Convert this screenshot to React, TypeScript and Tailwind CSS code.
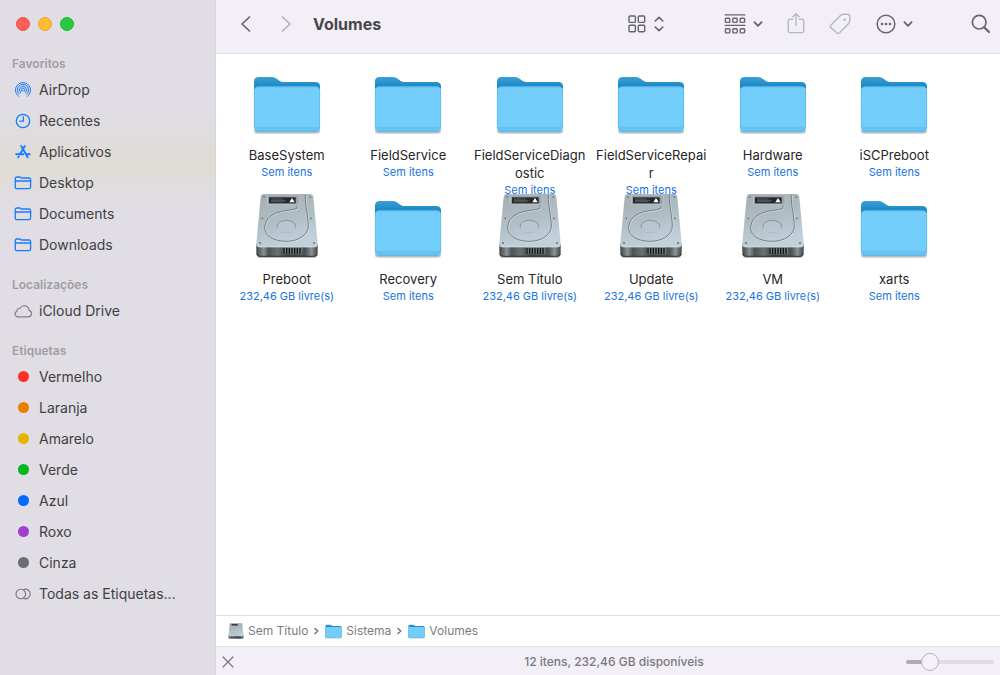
import React, { useState } from "react";

type Tag = {
    name: string,
    color: string,
}

type Item = {
    name: string,
    info: string,
    kind: "folder" | "drive",
}

const FREE = "232,46 GB livre(s)"
const EMPTY = "Sem itens"

const items: Item[] = [
    { name: "BaseSystem", info: EMPTY, kind: "folder" },
    { name: "FieldService", info: EMPTY, kind: "folder" },
    { name: "FieldServiceDiagnostic", info: EMPTY, kind: "folder" },
    { name: "FieldServiceRepair", info: EMPTY, kind: "folder" },
    { name: "Hardware", info: EMPTY, kind: "folder" },
    { name: "iSCPreboot", info: EMPTY, kind: "folder" },
    { name: "Preboot", info: FREE, kind: "drive" },
    { name: "Recovery", info: EMPTY, kind: "folder" },
    { name: "Sem Título", info: FREE, kind: "drive" },
    { name: "Update", info: FREE, kind: "drive" },
    { name: "VM", info: FREE, kind: "drive" },
    { name: "xarts", info: EMPTY, kind: "folder" },
]

const tags: Tag[] = [
    { name: "Vermelho", color: "bg-[#ff3126]" },
    { name: "Laranja", color: "bg-[#ed7d00]" },
    { name: "Amarelo", color: "bg-[#e8b400]" },
    { name: "Verde", color: "bg-[#00b81f]" },
    { name: "Azul", color: "bg-[#0069ff]" },
    { name: "Roxo", color: "bg-[#a03fcf]" },
    { name: "Cinza", color: "bg-[#6d6c73]" },
]

const stroke = {
    fill: "none",
    stroke: "currentColor",
    strokeLinecap: "round",
    strokeLinejoin: "round",
} as const

/* sidebar icons */

function AirDropIcon() {
    return (
        <svg width="18" height="18" viewBox="0 0 18 18" {...stroke} strokeWidth="1">
            <path d="M4.6 15.4A7.6 7.6 0 1 1 13.4 15.4" />
            <path d="M5.3 13.2A5.6 5.6 0 1 1 12.7 13.2" />
            <path d="M6.3 11.6A3.7 3.7 0 1 1 11.7 11.6" />
            <path d="M7.6 10.3A1.9 1.9 0 1 1 10.4 10.3" />
            <circle cx="9" cy="9.4" r="0.7" fill="currentColor" stroke="none" />
        </svg>
    )
}

function ClockIcon() {
    return (
        <svg width="18" height="18" viewBox="0 0 18 18" {...stroke} strokeWidth="1.3">
            <circle cx="9" cy="9" r="6.7" />
            <path d="M9.4 4.8V9.2H5.8" />
        </svg>
    )
}

function AppsIcon() {
    return (
        <svg width="18" height="18" viewBox="0 0 18 18" {...stroke} strokeWidth="1.9">
            <path d="M7.2 3.1L13.7 14.2" />
            <path d="M10.8 3.1L6.1 11" />
            <path d="M2.2 11.2H9.4M12.6 11.2H15.8" />
            <path d="M4.7 13.6L4.3 14.3" />
        </svg>
    )
}

function FolderLineIcon() {
    return (
        <svg width="18" height="18" viewBox="0 0 18 18" {...stroke} strokeWidth="1.3">
            <path d="M1.3 4.6Q1.3 3 2.9 3H5.6Q6.3 3 6.8 3.5L7.4 4H14.9Q16.6 4 16.6 5.6V13Q16.6 14.7 14.9 14.7H3Q1.3 14.7 1.3 13Z" />
            <path d="M1.3 7H16.6" />
        </svg>
    )
}

function CloudIcon() {
    return (
        <svg width="20" height="18" viewBox="0 0 20 18" {...stroke} strokeWidth="1.2">
            <path d="M5 14.8H15.2A3.3 3.3 0 0 0 16 8.3A4.8 4.8 0 0 0 7 6.3A2.7 2.7 0 0 0 3.9 9.2A2.9 2.9 0 0 0 5 14.8Z" />
        </svg>
    )
}

function AllTagsIcon() {
    return (
        <svg width="18" height="18" viewBox="0 0 18 18" {...stroke} strokeWidth="1.1">
            <circle cx="6.8" cy="9" r="4.8" />
            <path d="M9.8 4.5A4.8 4.8 0 1 1 9.8 13.5" />
        </svg>
    )
}

/* big icons */

function Folder({ className }: { className: string }) {
    return (
        <svg className={className} viewBox="52 18 210 192">
            <defs>
                <linearGradient id="folderBack" x1="0" y1="0" x2="0" y2="1">
                    <stop offset="0" stopColor="#3b9fd3" />
                    <stop offset="0.2" stopColor="#1886c5" />
                    <stop offset="1" stopColor="#1886c5" />
                </linearGradient>
                <linearGradient id="folderFront" x1="0" y1="0" x2="0" y2="1">
                    <stop offset="0" stopColor="#5fbdec" />
                    <stop offset="0.05" stopColor="#74cefb" />
                    <stop offset="0.88" stopColor="#73cdfa" />
                    <stop offset="0.9" stopColor="#63bdea" />
                    <stop offset="0.93" stopColor="#6cc7f4" />
                    <stop offset="1" stopColor="#5db5e2" />
                </linearGradient>
            </defs>
            <rect x="58" y="190" width="198" height="16" rx="10" fill="#000" opacity="0.22" />
            <path d="M58 50Q58 36 72 36H112Q120 36 126 41L134 47Q139 51 147 51H242Q256 51 256 65V190H58Z" fill="url(#folderBack)" />
            <path d="M58 79Q58 64 73 64H241Q256 64 256 79V187Q256 202 241 202H73Q58 202 58 187Z" fill="url(#folderFront)" />
            <path d="M59 78V188M255 78V188" stroke="#57b5e4" strokeWidth="2" />
        </svg>
    )
}

function Drive({ className }: { className: string }) {
    return (
        <svg className={className} viewBox="62 25 192 198">
            <defs>
                <linearGradient id="driveTop" x1="0" y1="0" x2="0.3" y2="1">
                    <stop offset="0" stopColor="#a4adb2" />
                    <stop offset="0.6" stopColor="#b2bfc7" />
                    <stop offset="1" stopColor="#c1d0da" />
                </linearGradient>
                <linearGradient id="driveFront" x1="0" y1="0" x2="1" y2="0">
                    <stop offset="0" stopColor="#3f4445" />
                    <stop offset="0.12" stopColor="#8b9294" />
                    <stop offset="0.2" stopColor="#4d5354" />
                    <stop offset="0.35" stopColor="#6a7173" />
                    <stop offset="0.5" stopColor="#3c4142" />
                    <stop offset="0.8" stopColor="#4d5354" />
                    <stop offset="0.9" stopColor="#8b9294" />
                    <stop offset="1" stopColor="#3f4445" />
                </linearGradient>
            </defs>
            <rect x="68" y="206" width="180" height="14" rx="7" fill="#000" opacity="0.25" />
            <path d="M66 178H250V205Q250 216 239 216H77Q66 216 66 205Z" fill="url(#driveFront)" />
            <path d="M67 208Q70 215 78 215H238Q246 215 249 208" fill="none" stroke="#303435" strokeWidth="3" />
            <path d="M146 188H204V209H146Z" fill="#6f7677" />
            <path d="M149 190V208M157 190V208M165 190V208M173 190V208M181 190V208M189 190V208M197 190V208" stroke="#151718" strokeWidth="4" />
            <path d="M90 28H226Q236 28 237 38L250 176Q251 187 240 187H76Q65 187 66 176L79 38Q80 28 90 28Z" fill="url(#driveTop)" />
            <path d="M67 181Q69 187 76 187H240Q247 187 249 181" fill="none" stroke="#dfe9f0" strokeWidth="2" />
            <path d="M99 31H194V60H99Z" fill="#9ba4aa" stroke="#c2cbd1" strokeWidth="2" />
            <rect x="104" y="38" width="80" height="18" fill="#25282a" />
            <path d="M110 43H145M110 47H155M110 51H150" stroke="#6f7578" strokeWidth="2" />
            <path d="M173 40L181 53H165Z" fill="#fff" />
            <path d="M213 31C213 72 221 88 222 124C222 150 192 170 156 170C118 170 90 154 91 128C93 104 109 91 131 83C151 76 172 78 188 71V62" fill="none" stroke="#d5dfe5" strokeWidth="3" transform="translate(2 2)" />
            <path d="M213 31C213 72 221 88 222 124C222 150 192 170 156 170C118 170 90 154 91 128C93 104 109 91 131 83C151 76 172 78 188 71V62" fill="none" stroke="#6b747a" strokeWidth="2.6" />
            <ellipse cx="156" cy="125" rx="28" ry="18" fill="#b9c6cf" stroke="#7c868d" strokeWidth="2.4" />
            <path d="M129 129A28 18 0 0 0 183 129" fill="none" stroke="#e4edf3" strokeWidth="2" />
            <g fill="#657077">
                <circle cx="89" cy="37" r="2.6" />
                <circle cx="228" cy="37" r="2.6" />
                <circle cx="84" cy="101" r="2.6" />
                <circle cx="230" cy="101" r="2.6" />
                <circle cx="77" cy="175" r="3" />
                <circle cx="239" cy="175" r="3" />
            </g>
        </svg>
    )
}

function ItemTile({ item }: { item: Item }) {
    return (
        <button type="button" className="flex h-[124px] min-w-0 flex-col items-center">
            <span className="flex h-16 shrink-0 items-end justify-center">
                {item.kind === "folder" ? <Folder className="h-16 w-[70px]" /> : <Drive className="h-[66px] w-16" />}
            </span>
            <span className="mt-[11px] w-[113px] text-center text-[13px] leading-[18px] break-all text-[#262626]">{item.name}</span>
            <span className="text-[11px] leading-4 whitespace-nowrap text-[#1a73dc]">{item.info}</span>
        </button>
    )
}

function SidebarLink({ icon, label }: { icon: React.ReactNode, label: string }) {
    return (
        <li>
            <a href="#" className="flex h-[31px] items-center gap-[5px] pl-3 text-[14px] text-[#404043]">
                <span className="flex w-[22px] justify-center text-[#1a7bff]">{icon}</span>
                {label}
            </a>
        </li>
    )
}

function SidebarTitle({ children }: { children: React.ReactNode }) {
    return <h2 className="pl-3 text-[12px] leading-5 font-semibold text-[#a09da3]">{children}</h2>
}

function Sidebar() {
    return (
        <aside className="w-[216px] shrink-0 border-r border-[#d6d3da] bg-[#e0dde4] bg-[linear-gradient(to_bottom,#e0dde4_115px,#dfdcd8_150px,#dfdcd7_170px,#e0dde4_200px)]">
            <div className="flex h-[54px] gap-2 pt-[17px] pl-4">
                <button type="button" aria-label="Fechar" className="size-[14px] rounded-full border border-[#e8554e] bg-[#ff5f57]" />
                <button type="button" aria-label="Minimizar" className="size-[14px] rounded-full border border-[#e8aa2a] bg-[#febc2e]" />
                <button type="button" aria-label="Ampliar" className="size-[14px] rounded-full border border-[#22b53a] bg-[#28c840]" />
            </div>
            <nav className="flex flex-col gap-[15px]">
                <section>
                    <SidebarTitle>Favoritos</SidebarTitle>
                    <ul>
                        <SidebarLink icon={<AirDropIcon />} label="AirDrop" />
                        <SidebarLink icon={<ClockIcon />} label="Recentes" />
                        <SidebarLink icon={<AppsIcon />} label="Aplicativos" />
                        <SidebarLink icon={<FolderLineIcon />} label="Desktop" />
                        <SidebarLink icon={<FolderLineIcon />} label="Documents" />
                        <SidebarLink icon={<FolderLineIcon />} label="Downloads" />
                    </ul>
                </section>
                <section>
                    <SidebarTitle>Localizações</SidebarTitle>
                    <ul>
                        <SidebarLink icon={<span className="text-[#828086]"><CloudIcon /></span>} label="iCloud Drive" />
                    </ul>
                </section>
                <section>
                    <SidebarTitle>Etiquetas</SidebarTitle>
                    <ul>
                        {tags.map((tag) => (
                            <SidebarLink key={tag.name} icon={<span className={`size-[11px] rounded-full ${tag.color}`} />} label={tag.name} />
                        ))}
                        <SidebarLink icon={<span className="text-[#77757b]"><AllTagsIcon /></span>} label="Todas as Etiquetas..." />
                    </ul>
                </section>
            </nav>
        </aside>
    )
}

function ChevronDown() {
    return (
        <svg width="10" height="8" viewBox="0 0 10 8" {...stroke} strokeWidth="1.8">
            <path d="M1.4 2.2L5 5.8L8.6 2.2" />
        </svg>
    )
}

function Toolbar() {
    return (
        <header className="flex h-[54px] items-center border-b border-[#e2e0e5] bg-[#f2eff6] pr-[9px] pb-[5px] pl-6 text-[#67656b]">
            <button type="button" aria-label="Voltar">
                <svg width="12" height="18" viewBox="0 0 12 18" {...stroke} strokeWidth="1.7">
                    <path d="M9.5 2L2 9L9.5 16" />
                </svg>
            </button>
            <button type="button" aria-label="Avançar" className="ml-7 text-[#b4b2b8]">
                <svg width="12" height="18" viewBox="0 0 12 18" {...stroke} strokeWidth="1.7">
                    <path d="M2.5 2L10 9L2.5 16" />
                </svg>
            </button>
            <h1 className="ml-[21px] flex-1 text-[16px] font-bold text-[#47464a]">Volumes</h1>
            <button type="button" aria-label="Ver como ícones" className="flex items-center gap-2">
                <svg width="18" height="18" viewBox="0 0 18 18" {...stroke} strokeWidth="1.4">
                    <rect x="1" y="1" width="6.4" height="6.4" rx="1" />
                    <rect x="10.3" y="1" width="6.4" height="6.4" rx="1" />
                    <rect x="1" y="10.3" width="6.4" height="6.4" rx="1" />
                    <rect x="10.3" y="10.3" width="6.4" height="6.4" rx="1" />
                </svg>
                <svg width="10" height="16" viewBox="0 0 10 16" {...stroke} strokeWidth="1.6">
                    <path d="M1.2 5L5 1.4L8.8 5M1.2 11L5 14.6L8.8 11" />
                </svg>
            </button>
            <button type="button" aria-label="Agrupar" className="ml-[60px] flex items-center gap-[7px]">
                <svg width="22" height="20" viewBox="0 0 22 20" {...stroke} strokeWidth="1.4">
                    <path d="M1.2 0.9H20.8M1.2 11.4H20.8" />
                    <rect x="1.4" y="4.2" width="4.4" height="4.2" rx="0.8" />
                    <rect x="8.8" y="4.2" width="4.4" height="4.2" rx="0.8" />
                    <rect x="16.2" y="4.2" width="4.4" height="4.2" rx="0.8" />
                    <rect x="1.4" y="14.7" width="4.4" height="4.2" rx="0.8" />
                    <rect x="8.8" y="14.7" width="4.4" height="4.2" rx="0.8" />
                    <rect x="16.2" y="14.7" width="4.4" height="4.2" rx="0.8" />
                </svg>
                <ChevronDown />
            </button>
            <button type="button" aria-label="Compartilhar" className="ml-6 text-[#b9b7be]">
                <svg width="18" height="22" viewBox="0 0 18 22" {...stroke} strokeWidth="1.4">
                    <path d="M5.8 6.2H3.2Q1.2 6.2 1.2 8.2V17.6Q1.2 19.6 3.2 19.6H14.8Q16.8 19.6 16.8 17.6V8.2Q16.8 6.2 14.8 6.2H12.2" />
                    <path d="M9 12.6V1M5.8 3.8L9 0.8L12.2 3.8" />
                </svg>
            </button>
            <button type="button" aria-label="Editar etiquetas" className="ml-6 text-[#b9b7be]">
                <svg width="22" height="22" viewBox="0 0 22 22" {...stroke} strokeWidth="1.4">
                    <path d="M1.6 12.4L11.4 2.5Q12.6 1.2 14.2 1.2H18.4Q20.8 1.2 20.8 3.6V7.6Q20.8 9.2 19.6 10.5L10.4 20Q9.2 21 8 20L1.6 14.4Q0.7 13.4 1.6 12.4Z" />
                    <circle cx="15.6" cy="6.8" r="1.2" fill="currentColor" stroke="none" />
                </svg>
            </button>
            <button type="button" aria-label="Mais ações" className="ml-[25px] flex items-center gap-[7px]">
                <svg width="20" height="20" viewBox="0 0 20 20" {...stroke} strokeWidth="1.5">
                    <circle cx="10" cy="10" r="8.8" />
                    <g fill="currentColor" stroke="none">
                        <circle cx="6" cy="10" r="1.3" />
                        <circle cx="10" cy="10" r="1.3" />
                        <circle cx="14" cy="10" r="1.3" />
                    </g>
                </svg>
                <ChevronDown />
            </button>
            <button type="button" aria-label="Buscar" className="ml-[58px]">
                <svg width="20" height="20" viewBox="0 0 20 20" {...stroke} strokeWidth="1.7">
                    <circle cx="8.2" cy="8.2" r="6.8" />
                    <path d="M13.2 13.2L18 18" strokeWidth="2.2" />
                </svg>
            </button>
        </header>
    )
}

function PathSeparator() {
    return (
        <svg width="5" height="8" viewBox="0 0 5 8" {...stroke} strokeWidth="1.4" className="text-[#6f6f73]">
            <path d="M1 1.4L3.8 4L1 6.6" />
        </svg>
    )
}

function PathBar() {
    return (
        <nav aria-label="Caminho" className="flex h-8 items-center gap-[6px] border-y border-[#e2e0e5] pl-3 text-[12px] text-[#7c7c7f]">
            <a href="#" className="flex items-center gap-1">
                <Drive className="size-4" />
                Sem Título
            </a>
            <PathSeparator />
            <a href="#" className="flex items-center gap-1">
                <Folder className="h-4 w-[17px]" />
                Sistema
            </a>
            <PathSeparator />
            <a href="#" className="flex items-center gap-1">
                <Folder className="h-4 w-[17px]" />
                Volumes
            </a>
        </nav>
    )
}

function StatusBar() {
    const [size, setSize] = useState(22)

    return (
        <footer className="flex h-7 items-center bg-[#f2eff6] px-[6px] pt-px text-[12px] text-[#7a787e]">
            <div className="flex w-[88px]">
                <button type="button" aria-label="Parar">
                    <svg width="12" height="12" viewBox="0 0 12 12" {...stroke} strokeWidth="1.2">
                        <path d="M1 1L11 11M11 1L1 11" />
                    </svg>
                </button>
            </div>
            <p className="flex-1 pl-3 text-center font-medium">12 itens, 232,46 GB disponíveis</p>
            <input
                type="range"
                aria-label="Tamanho dos ícones"
                value={size}
                onChange={(e) => setSize(Number(e.target.value))}
                style={{ backgroundImage: `linear-gradient(to right, #afacb3 ${size}%, #dfdce3 ${size}%)` }}
                className="h-1 w-[88px] appearance-none rounded-full [&::-webkit-slider-thumb]:size-[18px] [&::-webkit-slider-thumb]:appearance-none [&::-webkit-slider-thumb]:rounded-full [&::-webkit-slider-thumb]:border [&::-webkit-slider-thumb]:border-[#b5b2b9] [&::-webkit-slider-thumb]:bg-[#f4f1f8]"
            />
        </footer>
    )
}

export default function App() {
    return (
        <div className="flex min-h-screen bg-white font-['Inter',sans-serif]">
            <Sidebar />
            <div className="flex min-w-0 flex-1 flex-col">
                <Toolbar />
                <main className="grid flex-1 grid-cols-6 content-start pt-[17px] pr-[45px] pl-[10px]">
                    {items.map((item) => (
                        <ItemTile key={item.name} item={item} />
                    ))}
                </main>
                <PathBar />
                <StatusBar />
            </div>
        </div>
    )
}
